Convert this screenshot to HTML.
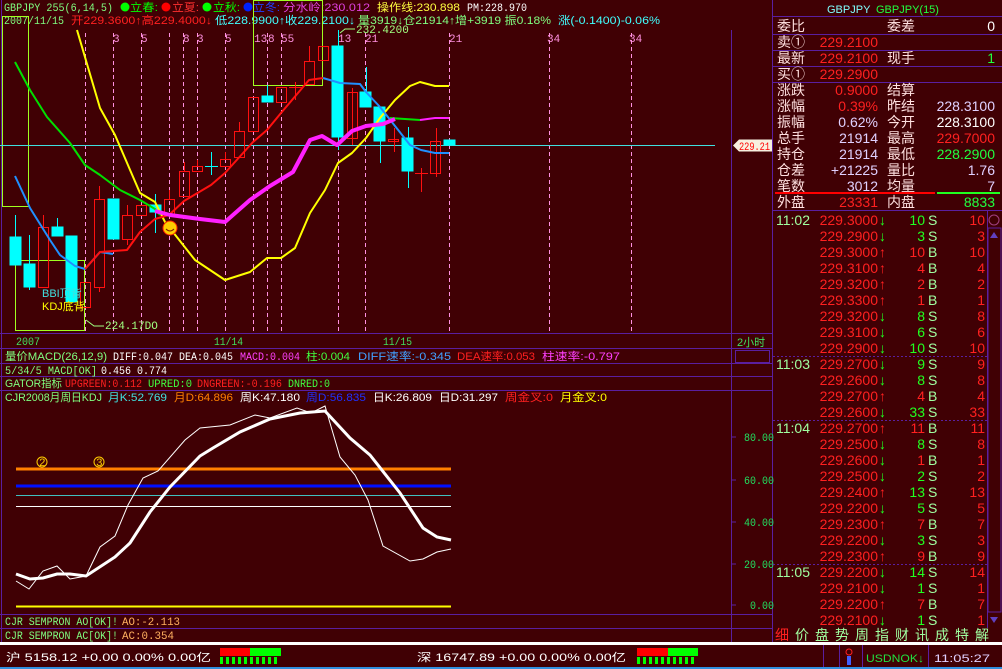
<!DOCTYPE html>
<html><head><meta charset="utf-8"><style>
html,body{margin:0;padding:0;background:#400004;width:1002px;height:669px;overflow:hidden}
svg{display:block}
text{font-family:"Liberation Mono","Noto Sans CJK SC",monospace;font-size:11px}
.s{font-family:"Liberation Sans","Noto Sans CJK SC",sans-serif}
.r{font-family:"Liberation Sans","Noto Sans CJK SC",sans-serif;font-size:14px}
</style></head><body>
<svg width="1002" height="669" viewBox="0 0 1002 669" xmlns="http://www.w3.org/2000/svg">
<rect width="1002" height="669" fill="#400004"/>
<g stroke="#5a1fa0" stroke-width="1" fill="none">
<line x1="1.5" y1="0" x2="1.5" y2="642"/>
<line x1="731.5" y1="30" x2="731.5" y2="642"/>
<line x1="772.5" y1="0" x2="772.5" y2="642"/>
<line x1="0" y1="333.5" x2="772" y2="333.5"/>
<line x1="0" y1="348.5" x2="772" y2="348.5"/>
<line x1="0" y1="363.5" x2="772" y2="363.5"/>
<line x1="0" y1="376.5" x2="772" y2="376.5"/>
<line x1="0" y1="390.5" x2="772" y2="390.5"/>
<line x1="0" y1="614.5" x2="772" y2="614.5"/>
<line x1="0" y1="628.5" x2="772" y2="628.5"/>
<rect x="735.5" y="350.5" width="34" height="12"/>
</g>
<!-- header -->
<g lengthAdjust="spacingAndGlyphs">
<text x="4" y="11" fill="#80ff80" textLength="109" lengthAdjust="spacingAndGlyphs">GBPJPY 255(6,14,5)</text>
<circle cx="125" cy="7" r="4.5" fill="#00ff00"/><text x="130" y="11" fill="#00ff00" class="s" font-size="12" textLength="28" lengthAdjust="spacingAndGlyphs">立春:</text>
<circle cx="166" cy="7" r="4.5" fill="#ff0000"/><text x="172" y="11" fill="#ff3030" class="s" font-size="12" textLength="27" lengthAdjust="spacingAndGlyphs">立夏:</text>
<circle cx="207" cy="7" r="4.5" fill="#00ff00"/><text x="213" y="11" fill="#00ff00" class="s" font-size="12" textLength="27" lengthAdjust="spacingAndGlyphs">立秋:</text>
<circle cx="248" cy="7" r="4.5" fill="#0020ff"/><text x="253" y="11" fill="#2040ff" class="s" font-size="12" textLength="27" lengthAdjust="spacingAndGlyphs">立冬:</text>
<text x="283" y="11" fill="#e040e0" class="s" font-size="12" textLength="87" lengthAdjust="spacingAndGlyphs">分水岭:230.012</text>
<text x="377" y="11" fill="#ffff40" class="s" font-size="12" textLength="83" lengthAdjust="spacingAndGlyphs">操作线:230.898</text>
<text x="467" y="11" fill="#ffffff" textLength="60" lengthAdjust="spacingAndGlyphs">PM:228.970</text>
<text x="4" y="24" fill="#80ff80" textLength="60" lengthAdjust="spacingAndGlyphs">2007/11/15</text>
<text x="71" y="24" fill="#ff2020" class="s" font-size="12" textLength="141" lengthAdjust="spacingAndGlyphs">开229.3600↑高229.4000↓</text>
<text x="215" y="24" fill="#40ffff" class="s" font-size="12" textLength="140" lengthAdjust="spacingAndGlyphs">低228.9900↑收229.2100↓</text>
<text x="358" y="24" fill="#80ff80" class="s" font-size="12" textLength="193" lengthAdjust="spacingAndGlyphs">量3919↓仓21914↑增+3919 振0.18%</text>
<text x="558" y="24" fill="#40ffff" class="s" font-size="12" textLength="102" lengthAdjust="spacingAndGlyphs">涨(-0.1400)-0.06%</text>
</g>
<g stroke="#ff90e0" stroke-width="1" stroke-dasharray="4,3">
<line x1="85.5" y1="33" x2="85.5" y2="333"/><line x1="113.5" y1="33" x2="113.5" y2="333"/>
<line x1="141.5" y1="33" x2="141.5" y2="333"/><line x1="169.5" y1="33" x2="169.5" y2="333"/>
<line x1="183.5" y1="33" x2="183.5" y2="333"/><line x1="197.5" y1="33" x2="197.5" y2="333"/>
<line x1="225.5" y1="33" x2="225.5" y2="333"/><line x1="253.5" y1="33" x2="253.5" y2="333"/>
<line x1="267.5" y1="33" x2="267.5" y2="333"/><line x1="281.5" y1="33" x2="281.5" y2="333"/>
<line x1="338.5" y1="33" x2="338.5" y2="333"/><line x1="365.5" y1="33" x2="365.5" y2="333"/>
<line x1="449.5" y1="33" x2="449.5" y2="333"/><line x1="549.5" y1="33" x2="549.5" y2="333"/>
<line x1="631.5" y1="33" x2="631.5" y2="333"/>
</g>
<g fill="#ff90e0" class="s" font-size="11">
<text x="113" y="42">3</text><text x="141" y="42">5</text><text x="183" y="42">8</text><text x="197" y="42">3</text><text x="225" y="42">5</text>
<text x="254" y="42">13</text><text x="268" y="42">8</text><text x="281" y="42">55</text><text x="338" y="42">13</text><text x="365" y="42">21</text>
<text x="449" y="42">21</text><text x="547" y="42">34</text><text x="629" y="42">34</text>
</g>
<g stroke="#a0ff20" fill="none" stroke-width="1">
<rect x="2.5" y="16.5" width="26" height="190"/>
<rect x="15.5" y="260.5" width="69" height="70"/>
<rect x="253.5" y="0.5" width="69" height="85"/>
</g>
<line x1="0" y1="145.5" x2="715" y2="145.5" stroke="#40e0e0"/>
<g stroke="#00ffff" fill="#00ffff">
<line x1="15.5" y1="215" x2="15.5" y2="265"/><rect x="10" y="237" width="11" height="28"/>
<line x1="29.5" y1="235" x2="29.5" y2="290"/><rect x="24" y="264" width="11" height="23"/>
<line x1="57.5" y1="218" x2="57.5" y2="236"/><rect x="52" y="227" width="11" height="9"/>
<rect x="66" y="236" width="11" height="66"/>
<rect x="108" y="199" width="11" height="40"/>
<line x1="155.5" y1="194" x2="155.5" y2="233"/><rect x="150" y="205" width="11" height="7"/>
<line x1="211.5" y1="152" x2="211.5" y2="175"/><line x1="205" y1="166.5" x2="218" y2="166.5"/>
<line x1="267.5" y1="85" x2="267.5" y2="102"/><rect x="262" y="96" width="11" height="6"/>
<line x1="338.5" y1="30" x2="338.5" y2="150"/><rect x="332" y="46" width="11" height="91"/>
<line x1="366.5" y1="67" x2="366.5" y2="107"/><rect x="360" y="92" width="11" height="15"/>
<line x1="380.5" y1="107" x2="380.5" y2="163"/><rect x="374" y="107" width="11" height="34"/>
<line x1="408.5" y1="127" x2="408.5" y2="188"/><rect x="402" y="138" width="11" height="33"/>
<rect x="444" y="140" width="11" height="5"/>
</g>
<g stroke="#ff1010" fill="none">
<line x1="43.5" y1="215" x2="43.5" y2="228"/><rect x="38.5" y="227.5" width="10" height="60"/>
<rect x="80.5" y="282.5" width="10" height="25"/>
<line x1="99.5" y1="186" x2="99.5" y2="199"/><rect x="94.5" y="199.5" width="10" height="88"/><line x1="99.5" y1="288" x2="99.5" y2="292"/>
<line x1="127.5" y1="205" x2="127.5" y2="215"/><rect x="122.5" y="215.5" width="10" height="24"/><line x1="127.5" y1="240" x2="127.5" y2="245"/>
<rect x="136.5" y="205.5" width="10" height="10"/>
<line x1="169.5" y1="190" x2="169.5" y2="199"/><rect x="164.5" y="199.5" width="10" height="16"/>
<line x1="184.5" y1="162" x2="184.5" y2="171"/><rect x="179.5" y="171.5" width="10" height="25"/>
<line x1="197.5" y1="160" x2="197.5" y2="167"/><rect x="192.5" y="166.5" width="10" height="5"/>
<line x1="225.5" y1="152" x2="225.5" y2="159"/><rect x="220.5" y="159.5" width="10" height="7"/>
<line x1="239.5" y1="122" x2="239.5" y2="131"/><rect x="234.5" y="131.5" width="10" height="26"/>
<rect x="248.5" y="97.5" width="10" height="34"/>
<rect x="276.5" y="87.5" width="10" height="15"/>
<line x1="295.5" y1="82" x2="295.5" y2="100"/><line x1="289" y1="87.5" x2="302" y2="87.5"/>
<line x1="309.5" y1="46" x2="309.5" y2="61"/><rect x="304.5" y="61.5" width="10" height="23"/>
<rect x="318.5" y="46.5" width="10" height="14"/>
<line x1="352.5" y1="88" x2="352.5" y2="145"/><rect x="347.5" y="92.5" width="10" height="46"/>
<line x1="394.5" y1="128" x2="394.5" y2="152"/><rect x="388.5" y="139.5" width="10" height="2"/>
<line x1="421.5" y1="168" x2="421.5" y2="192"/><line x1="415" y1="173.5" x2="428" y2="173.5"/>
<line x1="436.5" y1="128" x2="436.5" y2="177"/><rect x="430.5" y="141.5" width="10" height="32"/>
</g>
<g fill="none" stroke-linejoin="round">
<polyline stroke="#ffff00" stroke-width="2" points="77,30 100,108 115,135 140,193 155,202 165,222 195,260 225,280 250,272 267,258 281,258 295,248 310,213 325,190 338,163 352,153 366,138 380,118 395,100 410,86 420,82 435,86 449,86"/>
<polyline stroke="#00e000" stroke-width="2" points="15,62 30,90 47,117 70,143 85,165 100,175 120,190 140,200 155,209 160,215"/>
<polyline stroke="#00e000" stroke-width="2" points="390,118 420,120"/>
<polyline stroke="#2090ff" stroke-width="2" points="15,176 30,208 50,240 60,255 75,266 85,269 100,252 113,254"/>
<polyline stroke="#2090ff" stroke-width="2" points="323,78 340,83 360,84 366,92 380,107 395,126 410,145 421,150 435,153 449,153"/>
<polyline stroke="#ff1010" stroke-width="2" points="85,269 100,252 127,250 140,232 155,219 169,215 184,201 211,185 225,173 253,142 267,130 281,113 309,80 323,78"/>
<polyline stroke="#ff20ff" stroke-width="4" points="155,211 170,215 200,219 225,222 250,200 270,186 293,172 310,140 322,136 337,145 352,131 366,126 383,124 395,119"/>
<polyline stroke="#ff20ff" stroke-width="2" points="420,120 435,118 449,118"/>
</g>
<circle cx="170" cy="228" r="7" fill="#ffcc00" stroke="#ff2000"/>
<path d="M166,229 q4,4 8,0" stroke="#802000" fill="none"/>
<text x="42" y="297" fill="#40e0e0" class="s" font-size="12">BBI顶背</text>
<text x="42" y="310" fill="#ffff00" class="s" font-size="12">KDJ底背</text>
<polyline points="86,320 94,326 104,326" stroke="#a0ff80" fill="none"/>
<text x="105" y="329" fill="#a0ff80" font-size="11">224.17DO</text>
<polyline points="340,33 345,29 355,29" stroke="#a0ff80" fill="none"/>
<text x="356" y="33" fill="#a0ff80" font-size="11">232.4200</text>
<path d="M733,145.5 l6,-6 h33 v12 h-33 z" fill="#f8f0e0"/>
<text x="739" y="150" fill="#ff0000" font-size="11" textLength="31" lengthAdjust="spacingAndGlyphs">229.21</text>
<text x="16" y="345" fill="#40e060" textLength="24" lengthAdjust="spacingAndGlyphs">2007</text>
<text x="214" y="345" fill="#40e060" textLength="29" lengthAdjust="spacingAndGlyphs">11/14</text>
<text x="383" y="345" fill="#40e060" textLength="29" lengthAdjust="spacingAndGlyphs">11/15</text>
<text x="737" y="346" fill="#40e060" class="s" font-size="12">2小时</text>
<!-- legends -->
<g font-size="11">
<text x="5" y="360" fill="#80ff80" class="s" textLength="102" lengthAdjust="spacingAndGlyphs">量价MACD(26,12,9)</text>
<text x="113" y="360" fill="#fff" textLength="120" lengthAdjust="spacingAndGlyphs">DIFF:0.047 DEA:0.045</text>
<text x="240" y="360" fill="#ff40ff" textLength="60" lengthAdjust="spacingAndGlyphs">MACD:0.004</text>
<text x="306" y="360" fill="#40ff40" class="s" textLength="44" lengthAdjust="spacingAndGlyphs">柱:0.004</text>
<text x="358" y="360" fill="#40a0ff" class="s" textLength="93" lengthAdjust="spacingAndGlyphs">DIFF速率:-0.345</text>
<text x="457" y="360" fill="#ff2020" class="s" textLength="78" lengthAdjust="spacingAndGlyphs">DEA速率:0.053</text>
<text x="542" y="360" fill="#ff40ff" class="s" textLength="78" lengthAdjust="spacingAndGlyphs">柱速率:-0.797</text>
<text x="5" y="374" fill="#80ff80" textLength="92" lengthAdjust="spacingAndGlyphs">5/34/5 MACD[OK]</text>
<text x="101" y="374" fill="#fff" textLength="66" lengthAdjust="spacingAndGlyphs">0.456 0.774</text>
<text x="5" y="387" fill="#80ff80" class="s" textLength="57" lengthAdjust="spacingAndGlyphs">GATOR指标</text>
<text x="65" y="387" fill="#ff2020" textLength="77" lengthAdjust="spacingAndGlyphs">UPGREEN:0.112</text>
<text x="148" y="387" fill="#40ff40" textLength="44" lengthAdjust="spacingAndGlyphs">UPRED:0</text>
<text x="197" y="387" fill="#ff2020" textLength="85" lengthAdjust="spacingAndGlyphs">DNGREEN:-0.196</text>
<text x="288" y="387" fill="#40ff40" textLength="42" lengthAdjust="spacingAndGlyphs">DNRED:0</text>
<text x="5" y="401" fill="#80ff80" class="s" textLength="97" lengthAdjust="spacingAndGlyphs">CJR2008月周日KDJ</text>
<text x="108" y="401" fill="#40e0e0" class="s" textLength="59" lengthAdjust="spacingAndGlyphs">月K:52.769</text>
<text x="174" y="401" fill="#ff8000" class="s" textLength="59" lengthAdjust="spacingAndGlyphs">月D:64.896</text>
<text x="240" y="401" fill="#fff" class="s" textLength="60" lengthAdjust="spacingAndGlyphs">周K:47.180</text>
<text x="306" y="401" fill="#2030ff" class="s" textLength="60" lengthAdjust="spacingAndGlyphs">周D:56.835</text>
<text x="373" y="401" fill="#fff" class="s" textLength="59" lengthAdjust="spacingAndGlyphs">日K:26.809</text>
<text x="439" y="401" fill="#fff" class="s" textLength="59" lengthAdjust="spacingAndGlyphs">日D:31.297</text>
<text x="505" y="401" fill="#ff2020" class="s" textLength="48" lengthAdjust="spacingAndGlyphs">周金叉:0</text>
<text x="560" y="401" fill="#ffff00" class="s" textLength="47" lengthAdjust="spacingAndGlyphs">月金叉:0</text>
</g>
<!-- KDJ -->
<line x1="16" y1="469" x2="451" y2="469" stroke="#ff8000" stroke-width="3"/>
<line x1="16" y1="486" x2="451" y2="486" stroke="#0010ff" stroke-width="3"/>
<line x1="16" y1="495.5" x2="451" y2="495.5" stroke="#40c0c0"/>
<line x1="16" y1="506.5" x2="451" y2="506.5" stroke="#ffffff"/>
<line x1="16" y1="606.5" x2="451" y2="606.5" stroke="#ffff00" stroke-width="2"/>
<circle cx="42" cy="462" r="5" fill="none" stroke="#ffcc00"/><text x="39" y="466" fill="#ffcc00" font-size="9">2</text>
<circle cx="99" cy="462" r="5" fill="none" stroke="#ffcc00"/><text x="96" y="466" fill="#ffcc00" font-size="9">3</text>
<polyline fill="none" stroke="#fff" stroke-width="3" points="16,574 30,579 43,578 57,574 70,574 86,576 115,557 130,543 150,512 170,487 200,456 213,448 240,432 270,419 300,413 325,411 350,438 370,455 400,493 423,528 437,537 451,540"/>
<polyline fill="none" stroke="#fff" stroke-width="1" points="16,581 29,589 43,571 57,566 70,579 86,576 100,547 115,536 128,505 143,478 158,471 185,440 200,428 230,425 255,415 270,418 297,408 311,413 325,406 340,457 355,475 368,500 383,546 410,561 423,559 437,552 451,549"/>
<g stroke="#5a1fa0"><line x1="732" y1="437" x2="736" y2="437"/><line x1="732" y1="480" x2="736" y2="480"/><line x1="732" y1="522" x2="736" y2="522"/><line x1="732" y1="564" x2="736" y2="564"/><line x1="732" y1="605" x2="736" y2="605"/></g>
<g fill="#20e060" font-size="11"><text x="744" y="441" textLength="30" lengthAdjust="spacingAndGlyphs">80.00</text><text x="744" y="484" textLength="30" lengthAdjust="spacingAndGlyphs">60.00</text><text x="744" y="526" textLength="30" lengthAdjust="spacingAndGlyphs">40.00</text><text x="744" y="568" textLength="30" lengthAdjust="spacingAndGlyphs">20.00</text><text x="750" y="609" textLength="24" lengthAdjust="spacingAndGlyphs">0.00</text></g>
<text x="5" y="625" fill="#80ff80" font-size="10" textLength="113" lengthAdjust="spacingAndGlyphs">CJR SEMPRON AO[OK]!</text><text x="122" y="625" fill="#ffb060" font-size="10" textLength="58" lengthAdjust="spacingAndGlyphs">AO:-2.113</text>
<text x="5" y="639" fill="#80ff80" font-size="10" textLength="113" lengthAdjust="spacingAndGlyphs">CJR SEMPRON  AC[OK]!</text><text x="122" y="639" fill="#ffb060" font-size="10" textLength="52" lengthAdjust="spacingAndGlyphs">AC:0.354</text>
<!-- right panel -->
<g stroke="#5a1fa0"><line x1="773" y1="16.5" x2="1002" y2="16.5"/><line x1="773" y1="34.5" x2="1002" y2="34.5"/><line x1="773" y1="50.5" x2="1002" y2="50.5"/><line x1="773" y1="66.5" x2="1002" y2="66.5"/><line x1="773" y1="82.5" x2="1002" y2="82.5"/><line x1="773" y1="210.5" x2="1002" y2="210.5"/><line x1="987.5" y1="210" x2="987.5" y2="628"/></g>
<text x="827" y="13" fill="#80ffff" class="s" font-size="13">GBPJPY</text><text x="876" y="13" fill="#20ff40" class="s" font-size="13">GBPJPY(15)</text>
<g fill="#ffe0e0">
<text x="777" y="31" class="r">委比</text><text x="887" y="31" class="r">委差</text>
<text x="777" y="47" class="r">卖①</text><text x="777" y="63" class="r">最新</text><text x="887" y="63" class="r">现手</text>
<text x="777" y="79" class="r">买①</text>
<text x="777" y="95" class="r">涨跌</text><text x="887" y="95" class="r">结算</text>
<text x="777" y="111" class="r">涨幅</text><text x="887" y="111" class="r">昨结</text>
<text x="777" y="127" class="r">振幅</text><text x="887" y="127" class="r">今开</text>
<text x="777" y="143" class="r">总手</text><text x="887" y="143" class="r">最高</text>
<text x="777" y="159" class="r">持仓</text><text x="887" y="159" class="r">最低</text>
<text x="777" y="175" class="r">仓差</text><text x="887" y="175" class="r">量比</text>
<text x="777" y="191" class="r">笔数</text><text x="887" y="191" class="r">均量</text>
<text x="777" y="207" class="r">外盘</text><text x="887" y="207" class="r">内盘</text>
</g>
<g text-anchor="end">
<text x="995" y="31" fill="#fff" class="r">0</text>
<text x="878" y="47" fill="#ff2020" class="r">229.2100</text>
<text x="878" y="63" fill="#ff2020" class="r">229.2100</text><text x="995" y="63" fill="#20ff40" class="r">1</text>
<text x="878" y="79" fill="#ff2020" class="r">229.2900</text>
<text x="878" y="95" fill="#ff2020" class="r">0.9000</text>
<text x="878" y="111" fill="#ff2020" class="r">0.39%</text><text x="995" y="111" fill="#e0d0ff" class="r">228.3100</text>
<text x="878" y="127" fill="#e0d0ff" class="r">0.62%</text><text x="995" y="127" fill="#fff" class="r">228.3100</text>
<text x="878" y="143" fill="#e0d0ff" class="r">21914</text><text x="995" y="143" fill="#ff2020" class="r">229.7000</text>
<text x="878" y="159" fill="#e0d0ff" class="r">21914</text><text x="995" y="159" fill="#20ff40" class="r">228.2900</text>
<text x="878" y="175" fill="#e0d0ff" class="r">+21225</text><text x="995" y="175" fill="#e0d0ff" class="r">1.76</text>
<text x="878" y="191" fill="#e0d0ff" class="r">3012</text><text x="995" y="191" fill="#e0d0ff" class="r">7</text>
<text x="878" y="207" fill="#ff2020" class="r">23331</text><text x="995" y="207" fill="#20ff40" class="r">8833</text>
</g>
<rect x="775" y="192" width="160" height="2" fill="#ff0000"/><rect x="937" y="192" width="63" height="2" fill="#20ff20"/>
<g stroke="#5a1fa0" stroke-dasharray="2,2"><line x1="773" y1="356.5" x2="987" y2="356.5"/><line x1="773" y1="420.5" x2="987" y2="420.5"/><line x1="773" y1="564.5" x2="987" y2="564.5"/></g>
<rect x="988" y="228" width="13" height="384" fill="none" stroke="#5a1fa0"/>
<circle cx="994" cy="220" r="5" fill="none" stroke="#a04080"/>
<path d="M990,238 l4,-6 l4,6z" fill="#6040c0"/><path d="M990,617 l4,6 l4,-6z" fill="#6040c0"/>
<g id="ticks"></g>
<g fill="#a0ffa0"><text x="775" y="640" fill="#ff2020" class="r">细</text><text x="795" y="640" class="r">价</text><text x="815" y="640" class="r">盘</text><text x="835" y="640" class="r">势</text><text x="855" y="640" class="r">周</text><text x="875" y="640" class="r">指</text><text x="895" y="640" class="r">财</text><text x="915" y="640" class="r">讯</text><text x="935" y="640" class="r">成</text><text x="955" y="640" class="r">特</text><text x="975" y="640" class="r">解</text></g>
<!-- bottom bar -->
<rect x="0" y="642" width="1002" height="3" fill="#ffffff"/>
<rect x="0" y="667" width="1002" height="2" fill="#3090e0"/>
<text x="6" y="661" fill="#ffffff" class="s" font-size="13" textLength="205" lengthAdjust="spacingAndGlyphs">沪 5158.12 +0.00 0.00% 0.00亿</text>
<rect x="220" y="648" width="30" height="8" fill="#ff0000"/><rect x="250" y="648" width="31" height="8" fill="#00ff00"/>
<g fill="#00ff00"><rect x="220" y="657" width="3" height="7"/><rect x="226" y="657" width="3" height="7"/><rect x="232" y="657" width="3" height="7"/><rect x="238" y="657" width="3" height="7"/><rect x="244" y="657" width="3" height="7"/><rect x="250" y="657" width="3" height="7"/><rect x="256" y="657" width="3" height="7"/><rect x="262" y="657" width="3" height="7"/><rect x="268" y="657" width="3" height="7"/><rect x="274" y="657" width="3" height="7"/></g>
<text x="417" y="661" fill="#ffffff" class="s" font-size="13" textLength="209" lengthAdjust="spacingAndGlyphs">深 16747.89 +0.00 0.00% 0.00亿</text>
<rect x="637" y="648" width="31" height="8" fill="#ff0000"/><rect x="668" y="648" width="30" height="8" fill="#00ff00"/>
<g fill="#00ff00"><rect x="637" y="657" width="3" height="7"/><rect x="643" y="657" width="3" height="7"/><rect x="649" y="657" width="3" height="7"/><rect x="655" y="657" width="3" height="7"/><rect x="661" y="657" width="3" height="7"/><rect x="667" y="657" width="3" height="7"/><rect x="673" y="657" width="3" height="7"/><rect x="679" y="657" width="3" height="7"/><rect x="685" y="657" width="3" height="7"/><rect x="691" y="657" width="3" height="7"/></g>
<g stroke="#5a1fa0"><line x1="823.5" y1="645" x2="823.5" y2="667"/><line x1="839.5" y1="645" x2="839.5" y2="667"/><line x1="862.5" y1="645" x2="862.5" y2="667"/><line x1="928.5" y1="645" x2="928.5" y2="667"/></g>
<circle cx="849" cy="652" r="3" fill="none" stroke="#ff2020"/><rect x="847" y="656" width="4" height="9" fill="#4060ff"/>
<text x="866" y="662" fill="#20e040" class="s" font-size="13" textLength="58" lengthAdjust="spacingAndGlyphs">USDNOK↓</text>
<text x="934" y="662" fill="#e0d0ff" class="s" font-size="13" textLength="56" lengthAdjust="spacingAndGlyphs">11:05:27</text>
</svg>
<script>
var rows=[["11:02","229.3000","d","10","S"],["","229.2900","d","3","S"],["","229.3000","u","10","B"],["","229.3100","u","4","B"],["","229.3200","u","2","B"],["","229.3300","u","1","B"],["","229.3200","d","8","S"],["","229.3100","d","6","S"],["","229.2900","d","10","S"],["11:03","229.2700","d","9","S"],["","229.2600","d","8","S"],["","229.2700","u","4","B"],["","229.2600","d","33","S"],["11:04","229.2700","u","11","B"],["","229.2500","d","8","S"],["","229.2600","d","1","B"],["","229.2500","d","2","S"],["","229.2400","u","13","S"],["","229.2200","d","5","S"],["","229.2300","u","7","B"],["","229.2200","d","3","S"],["","229.2300","u","9","B"],["11:05","229.2200","d","14","S"],["","229.2100","d","1","S"],["","229.2200","u","7","B"],["","229.2100","d","1","S"]];
var g=document.getElementById("ticks"),h="";
rows.forEach(function(r,i){var y=225+i*16;
if(r[0])h+='<text x="776" y="'+y+'" fill="#a0ffa0" class="r">'+r[0]+'</text>';
h+='<text x="878" y="'+y+'" fill="#ff2020" class="r" text-anchor="end">'+r[1]+'</text>';
h+='<text x="879" y="'+y+'" fill="'+(r[2]=="u"?"#ff2020":"#20ff20")+'" class="r">'+(r[2]=="u"?"↑":"↓")+'</text>';
h+='<text x="925" y="'+y+'" fill="'+(r[4]=="S"?"#20ff20":"#ff2020")+'" class="r" text-anchor="end">'+r[3]+'</text>';
h+='<text x="928" y="'+y+'" fill="#a0ffa0" class="r">'+r[4]+'</text>';
h+='<text x="985" y="'+y+'" fill="#ff2020" class="r" text-anchor="end">'+r[3]+'</text>';});
g.innerHTML=h;
</script>
</body></html>
